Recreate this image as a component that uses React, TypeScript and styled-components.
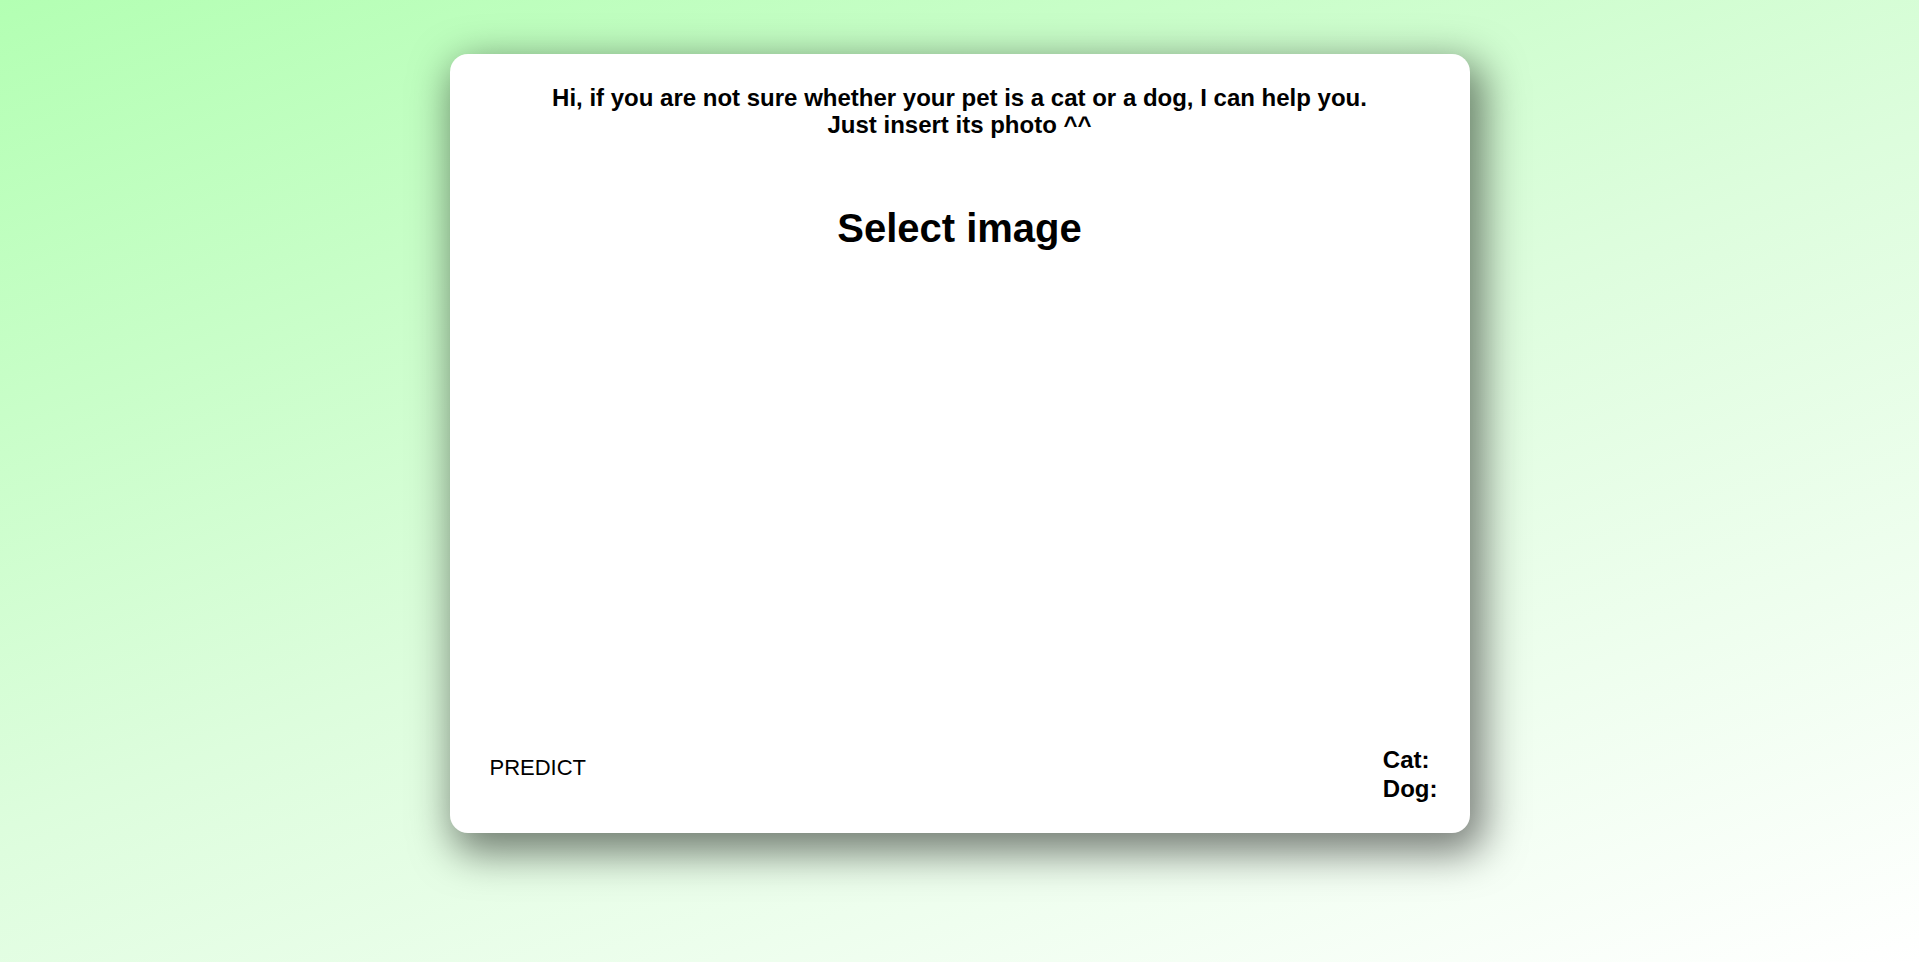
import React from "react";
import styled, { createGlobalStyle } from "styled-components";

const Global = createGlobalStyle`
  html, body {
    margin: 0;
    padding: 0;
  }
  body {
    font-family: "Liberation Sans", Arial, sans-serif;
    color: #000;
  }
`;

const Page = styled.div`
  min-height: 962px;
  box-sizing: border-box;
  padding-top: 54px;
  background: linear-gradient(160deg, #b3ffb3 0%, #ddfddd 50%, #ffffff 100%);
  display: flex;
  justify-content: center;
  align-items: flex-start;
`;

const Card = styled.div`
  width: 1020px;
  height: 779px;
  box-sizing: border-box;
  background: #fff;
  border-radius: 18px;
  box-shadow: 8px 14px 40px 6px rgba(0, 0, 0, 0.5);
  display: flex;
  flex-direction: column;
  align-items: center;
  padding: 30px 0 30px;
`;

const Intro = styled.p`
  margin: 0;
  font-size: 24px;
  line-height: 27px;
  font-weight: bold;
  text-align: center;
`;

const Title = styled.h1`
  margin: 67px 0 0;
  font-size: 40px;
  line-height: 46px;
  font-weight: bold;
  text-align: center;
`;

const Footer = styled.div`
  margin-top: auto;
  align-self: stretch;
  display: flex;
  justify-content: space-between;
  align-items: flex-start;
  padding: 0 32px 0 40px;
`;

const PredictButton = styled.button`
  margin-top: 10px;
  padding: 0;
  border: none;
  background: none;
  font-family: "Liberation Sans", Arial, sans-serif;
  font-size: 22px;
  line-height: 25px;
  color: #000;
  cursor: pointer;
`;

const Results = styled.div`
  display: flex;
  flex-direction: column;
`;

const ResultLine = styled.div`
  font-size: 24px;
  line-height: 29px;
  font-weight: bold;
`;

export default function App() {
  return (
    <>
      <Global />
      <Page>
        <Card>
          <Intro>
            Hi, if you are not sure whether your pet is a cat or a dog, I can help you.
            <br />
            Just insert its photo ^^
          </Intro>
          <Title>Select image</Title>
          <Footer>
            <PredictButton>PREDICT</PredictButton>
            <Results>
              <ResultLine>Cat:</ResultLine>
              <ResultLine>Dog:</ResultLine>
            </Results>
          </Footer>
        </Card>
      </Page>
    </>
  );
}
